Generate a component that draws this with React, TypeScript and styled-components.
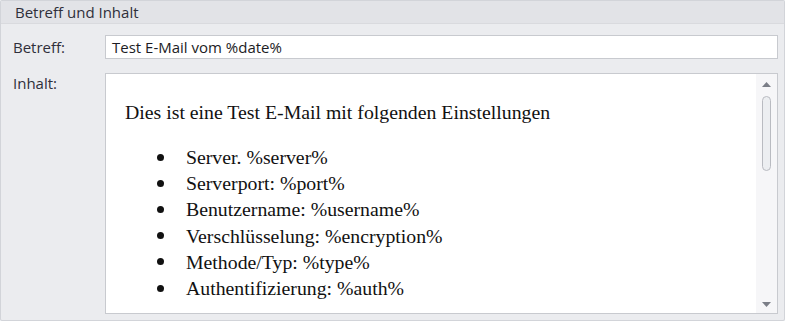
import React from "react";
import styled, { createGlobalStyle } from "styled-components";

const Global = createGlobalStyle`
  html, body {
    margin: 0;
    padding: 0;
    background: #ebecef;
  }
`;

const GroupPanel = styled.section`
  box-sizing: border-box;
  width: 785px;
  height: 321px;
  border: 1px solid #d2d4d9;
  border-radius: 2px;
  background: #ebecef;
  font-family: "Open Sans", "Noto Sans", sans-serif;
  display: flex;
  flex-direction: column;
`;

const Header = styled.header`
  height: 23px;
  flex: none;
  box-sizing: border-box;
  padding-left: 14px;
  display: flex;
  align-items: center;
  background: #e2e3e7;
  border-bottom: 1px solid #d9dade;
  color: #2f2f3a;
  font-size: 15px;
`;

const Body = styled.div`
  flex: 1;
  display: grid;
  grid-template-columns: 92px 1fr;
  grid-template-rows: 24px 1fr;
  row-gap: 14px;
  padding: 11px 6px 6px 12px;
  min-height: 0;
`;

const Label = styled.label<{ $top: number }>`
  color: #2f2f3a;
  font-size: 15px;
  line-height: 20px;
  padding-top: ${(p) => p.$top}px;
`;

const TextInput = styled.div`
  box-sizing: border-box;
  height: 24px;
  border: 1px solid #c8cacf;
  background: #fff;
  display: flex;
  align-items: center;
  padding-left: 6px;
  color: #1c1c24;
  font-size: 15px;
`;

const Editor = styled.div`
  box-sizing: border-box;
  border: 1px solid #c8cacf;
  background: #fff;
  display: flex;
  min-height: 0;
`;

const Document = styled.div`
  flex: 1;
  overflow: hidden;
  padding: 26px 0 0 19px;
  font-family: "Liberation Serif", "Times New Roman", serif;
  font-size: 19.8px;
  color: #111;
`;

const Para = styled.p`
  margin: 0 0 20px;
  line-height: 24px;
`;

const List = styled.ul`
  margin: 0;
  padding-left: 32px;
  list-style: none;
  line-height: 26.2px;
`;

const Item = styled.li`
  display: flex;
  align-items: center;

  &::before {
    content: "";
    width: 7px;
    height: 7px;
    border-radius: 50%;
    background: #111;
    margin-right: 22px;
    flex: none;
  }
`;

const ScrollBar = styled.div`
  width: 21px;
  flex: none;
  background: #f6f6f8;
  display: flex;
  flex-direction: column;
  align-items: center;
  padding: 8px 0 6px;
  box-sizing: border-box;
`;

const Thumb = styled.div`
  margin-top: 9px;
  width: 7px;
  height: 73px;
  border: 1px solid #b9bbc1;
  border-radius: 5px;
  background: #eceef1;
`;

const Spacer = styled.div`
  flex: 1;
`;

const Arrow = ({ down }: { down?: boolean }) => (
  <svg width="9" height="5" viewBox="0 0 9 5">
    <path d={down ? "M0 0h9L4.5 5z" : "M0 5h9L4.5 0z"} fill="#7b7e87" />
  </svg>
);

const items = [
  "Server. %server%",
  "Serverport: %port%",
  "Benutzername: %username%",
  "Verschlüsselung: %encryption%",
  "Methode/Typ: %type%",
  "Authentifizierung: %auth%",
];

export default function App() {
  return (
    <>
      <Global />
      <GroupPanel>
        <Header>Betreff und Inhalt</Header>
        <Body>
          <Label $top={2}>Betreff:</Label>
          <TextInput>Test E-Mail vom %date%</TextInput>
          <Label $top={0}>Inhalt:</Label>
          <Editor>
            <Document>
              <Para>Dies ist eine Test E-Mail mit folgenden Einstellungen</Para>
              <List>
                {items.map((t) => (
                  <Item key={t}>{t}</Item>
                ))}
              </List>
            </Document>
            <ScrollBar>
              <Arrow />
              <Thumb />
              <Spacer />
              <Arrow down />
            </ScrollBar>
          </Editor>
        </Body>
      </GroupPanel>
    </>
  );
}
